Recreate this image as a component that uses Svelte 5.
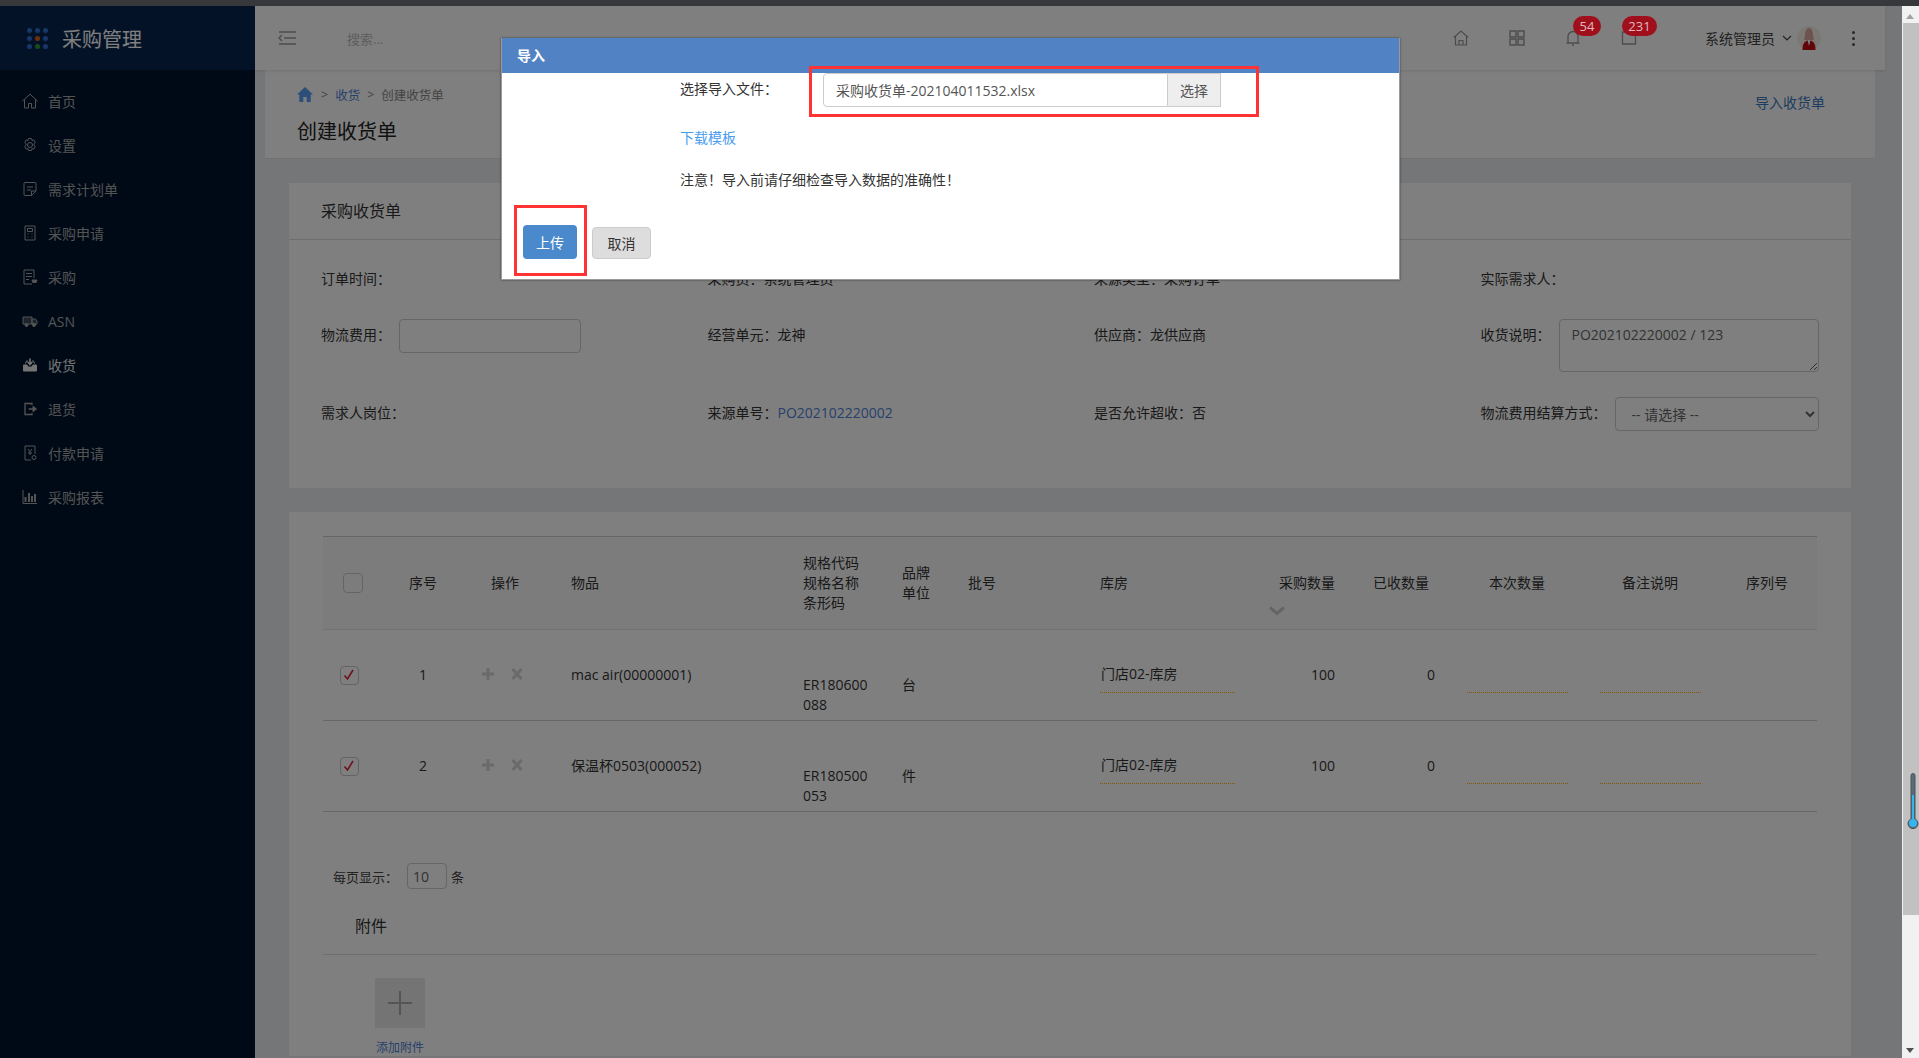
<script>
  const menu = [
    { name: "home", label: "首页" },
    { name: "gear", label: "设置" },
    { name: "note", label: "需求计划单" },
    { name: "calc", label: "采购申请" },
    { name: "list", label: "采购" },
    { name: "truck", label: "ASN" },
    { name: "inbox", label: "收货", active: true },
    { name: "exit", label: "退货" },
    { name: "pay", label: "付款申请" },
    { name: "chart", label: "采购报表" }
  ];

  const rows = [
    { no: 1, item: "mac air(00000001)", code: "ER180600088", unit: "台" },
    { no: 2, item: "保温杯0503(000052)", code: "ER180500053", unit: "件" }
  ];

  const dots = [
    "#2f6fd0", "#2f6fd0", "#2f6fd0",
    "#2f6fd0", "#d8601a", "#2f6fd0",
    "#2f6fd0", "#2f9a3a", "#2f6fd0"
  ];
</script>

<div class="shell">
  <div class="strip"></div>
  <div class="stage">
    <div class="app">
      <aside class="side">
        <div class="brand">
          <div class="dots">
            {#each dots as c}
              <i style="background:{c}"></i>
            {/each}
          </div>
          <span>采购管理</span>
        </div>
        <nav>
          {#each menu as m}
            <a class="item" class:active={m.active} href="#top">
              <svg viewBox="0 0 16 16" width="16" height="16" fill="none" stroke="currentColor" stroke-width="1">
                {#if m.name === "home"}
                  <path d="M.5 8 8 1.2 15.500 8M2.500 6.500V15h4v-4.500h3V15h4V6.500" />
                {:else if m.name === "gear"}
                  <circle cx="8" cy="8" r="2.500" />
                  <path d="M6.500 1.500h3l.5 2 1.800-.6 1.500 2.600-1.400 1.300 0 1.400 1.400 1.300-1.500 2.600-1.800-.6-.5 2h-3l-.5-2-1.800.6-1.500-2.600 1.400-1.300 0-1.400-1.400-1.300 1.500-2.600 1.800.6z" />
                {:else if m.name === "note"}
                  <path d="M3 1.500h10a1 1 0 0 1 1 1V10l-4.500 4.500H3a1 1 0 0 1-1-1v-11a1 1 0 0 1 1-1zM5 6h6M5 9h4M9.500 14.500V10H14" />
                {:else if m.name === "calc"}
                  <path d="M3 1h10v14H3zM5.500 3.500h5v3h-5zM5.500 9h1M9.500 9h1M5.500 12h1M9.500 12h1" />
                {:else if m.name === "list"}
                  <path d="M10 15H2V1h10v8M4 4.500h6M4 7.500h6M4 10.500h3" />
                  <path d="M10 11h5l-.8 2.500h-3.400z" fill="currentColor" />
                {:else if m.name === "truck"}
                  <path d="M1 4h9v7H1zM10 6h3.500L15 8v3h-5z" fill="currentColor" fill-opacity=".35" />
                  <circle cx="4.500" cy="12" r="1.500" fill="currentColor" />
                  <circle cx="12" cy="12" r="1.500" fill="currentColor" />
                {:else if m.name === "inbox"}
                  <path d="M1.500 8h3.500l1 2h4l1-2h3.500v6h-13z" fill="currentColor" />
                  <path d="M3.500 6.500 4.500 4H6M12.500 6.500 11.500 4H10" />
                  <path d="M8 1.500V7M5.800 5 8 7.500 10.200 5" stroke-width="1.600" />
                {:else if m.name === "exit"}
                  <path d="M10 4V2.500H3v11h7V12" stroke-width="1.300" />
                  <path d="M6.500 8H12.500" stroke-width="1.500" />
                  <path d="M11 5.200 14.500 8 11 10.800z" fill="currentColor" />
                {:else if m.name === "pay"}
                  <path d="M9 15H3V1h10v8" />
                  <path d="M6 4l2 2.500L10 4M8 6.500V10M6 8h4" />
                  <circle cx="12" cy="12.500" r="2" />
                {:else}
                  <path d="M1 1v13.500h14" />
                  <path d="M3.500 8v5M7 4v9M10 7v6M13 5v8" stroke-width="2" />
                {/if}
              </svg>
              <span>{m.label}</span>
            </a>
          {/each}
        </nav>
      </aside>

      <main class="main">
        <header class="top">
          <svg class="burger" viewBox="0 0 18 14" width="18" height="14" fill="none" stroke="currentColor" stroke-width="1.400">
            <path d="M1 1h17M6 7h12M1 13h17M4 4 1 7l3 3" />
          </svg>
          <span class="search">搜索...</span>
          <div class="tools">
            <svg class="tool" viewBox="0 0 16 16" width="16" height="16" fill="none" stroke="currentColor" stroke-width="1.200">
              <path d="M.8 7.500 8 1l7.200 6.500M2.500 6.500V15h11V6.500M6 15v-4.500h4V15M5 15h6" />
            </svg>
            <svg class="tool" viewBox="0 0 16 16" width="16" height="16" fill="none" stroke="currentColor" stroke-width="1.400">
              <path d="M1 1h6v6H1zM9 1h6v6H9zM1 9h6v6H1zM9 9h6v6H9z" />
            </svg>
            <span class="tool-wrap">
              <svg class="tool" viewBox="0 0 16 16" width="16" height="16" fill="none" stroke="currentColor" stroke-width="1.300">
                <path d="M3 13V6.500a5 5 0 0 1 10 0V13zM1.500 13h13M7 15h2" />
              </svg>
              <b class="badge one">54</b>
            </span>
            <span class="tool-wrap">
              <svg class="tool" viewBox="0 0 16 16" width="16" height="16" fill="none" stroke="currentColor" stroke-width="1.300">
                <path d="M1.500 2h13v12h-13z" />
              </svg>
              <b class="badge two">231</b>
            </span>
          </div>
          <div class="user">
            <span>系统管理员</span>
            <svg viewBox="0 0 10 6" width="10" height="6" fill="none" stroke="currentColor" stroke-width="1.200"><path d="M1 1l4 4 4-4" /></svg>
            <svg class="avatar" viewBox="0 0 24 24" width="24" height="24">
              <circle cx="12" cy="12" r="12" fill="#f6efe6" />
              <path d="M8 10c0-5 1.500-8 4-8s4 3 4 8l1 4H7z" fill="#d9a69a" />
              <path d="M5.500 24c0-6 1.500-9 6.500-10 5 1 6.500 4 6.500 10z" fill="#c00d12" />
              <path d="M10.500 14h3L12 20z" fill="#fff" />
            </svg>
          </div>
          <div class="kebab"><i></i><i></i><i></i></div>
        </header>

        <section class="crumbs">
          <div>
            <div class="trail">
              <svg viewBox="0 0 16 15" width="16" height="15"><path d="M8 0 0 7.500h2.300V15h4v-5h3.400v5h4V7.500H16z" fill="#5c9cf5" /></svg>
              <span class="sep">&gt;</span>
              <a href="#top">收货</a>
              <span class="sep">&gt;</span>
              <span class="now">创建收货单</span>
            </div>
            <h1>创建收货单</h1>
          </div>
          <a class="import" href="#top">导入收货单</a>
        </section>

        <section class="card first">
          <h2>采购收货单</h2>
          <div class="form">
            <div class="field"><span>订单时间：</span></div>
            <div class="field"><span>采购员：系统管理员</span></div>
            <div class="field"><span>来源类型：采购订单</span></div>
            <div class="field"><span>实际需求人：</span></div>

            <div class="field"><span>物流费用：</span><input class="fee" type="text" /></div>
            <div class="field"><span>经营单元：龙神</span></div>
            <div class="field"><span>供应商：龙供应商</span></div>
            <div class="field"><span>收货说明：</span><textarea class="memo">PO202102220002 / 123</textarea></div>

            <div class="field"><span>需求人岗位：</span></div>
            <div class="field"><span>来源单号：<a href="#top">PO202102220002</a></span></div>
            <div class="field"><span>是否允许超收：否</span></div>
            <div class="field"><span>物流费用结算方式：</span><select class="way"><option>-- 请选择 --</option></select></div>
          </div>
        </section>

        <section class="card second">
          <table>
            <colgroup>
              <col style="width:67px" /><col style="width:66px" /><col style="width:98px" />
              <col style="width:249px" /><col style="width:99px" /><col style="width:66px" />
              <col style="width:132px" /><col style="width:179px" /><col style="width:94px" />
              <col style="width:94px" /><col style="width:133px" /><col style="width:130px" />
              <col style="width:87px" />
            </colgroup>
            <thead>
              <tr>
                <th><span class="box head"></span></th>
                <th class="mid">序号</th>
                <th class="mid">操作</th>
                <th class="pl17">物品</th>
                <th>规格代码<br />规格名称<br />条形码</th>
                <th>品牌<br />单位</th>
                <th>批号</th>
                <th>库房</th>
                <th class="sorted">
                  采购数量
                  <svg viewBox="0 0 16 10" width="16" height="10" fill="none" stroke="#c8c8c8" stroke-width="3"><path d="M1 1.500l7 6 7-6" /></svg>
                </th>
                <th>已收数量</th>
                <th class="pl22">本次数量</th>
                <th class="pl22">备注说明</th>
                <th class="pl16">序列号</th>
              </tr>
            </thead>
            <tbody>
              {#each rows as r}
                <tr>
                  <td>
                    <span class="box">
                      <svg viewBox="0 0 14 14" width="14" height="14" fill="none" stroke="#e02030" stroke-width="1.600"><path d="M2.500 7.500 5.500 11 11 2" /></svg>
                    </span>
                  </td>
                  <td class="mid">{r.no}</td>
                  <td class="ops">
                    <svg viewBox="0 0 12 12" width="12" height="12" stroke="#d4d4d4" stroke-width="3"><path d="M6 0v12M0 6h12" /></svg>
                    <svg viewBox="0 0 12 12" width="12" height="12" stroke="#d4d4d4" stroke-width="3"><path d="M1.500 1 10.500 11M10.500 1 1.500 11" /></svg>
                  </td>
                  <td class="pl17">{r.item}</td>
                  <td class="two-down"><span class="code">{r.code}</span></td>
                  <td class="one-down">{r.unit}</td>
                  <td></td>
                  <td class="high"><div class="line store">门店02-库房</div></td>
                  <td class="num a">100</td>
                  <td class="num b">0</td>
                  <td class="high"><div class="line blank"></div></td>
                  <td class="high"><div class="line blank"></div></td>
                  <td></td>
                </tr>
              {/each}
            </tbody>
          </table>

          <div class="pager">
            <span>每页显示：</span>
            <input type="text" value="10" />
            <span>条</span>
          </div>

          <h3>附件</h3>
          <div class="attach">
            <div class="plus">
              <svg viewBox="0 0 24 24" width="24" height="24" stroke="#aaa" stroke-width="2"><path d="M12 0v24M0 12h24" /></svg>
            </div>
            <a href="#top">添加附件</a>
          </div>
        </section>
      </main>

      <div class="shade"></div>

      <div class="modal">
        <div class="modal-head">导入</div>
        <div class="modal-body">
          <div class="pick">
            <span>选择导入文件：</span>
            <div class="file">
              <input type="text" value="采购收货单-202104011532.xlsx" />
              <button type="button">选择</button>
            </div>
          </div>
          <a class="tpl" href="#top">下载模板</a>
          <p>注意！导入前请仔细检查导入数据的准确性！</p>
        </div>
        <div class="modal-foot">
          <button type="button" class="up">上传</button>
          <button type="button" class="no">取消</button>
        </div>
        <div class="mark mark-file"></div>
        <div class="mark mark-up"></div>
      </div>
    </div>

    <div class="bar">
      <span class="arrow up-a"></span>
      <div class="thumb"></div>
      <span class="arrow down-a"></span>
      <svg class="thermo" viewBox="0 0 12 56" width="12" height="56">
        <path d="M4 2.500a2 2 0 0 1 4 0V46a5 5 0 1 1-4 0z" fill="#5c6b73" stroke="#4a555c" />
        <rect x="5" y="22" width="2" height="26" fill="#35b4ee" />
        <circle cx="6" cy="50" r="4" fill="#35b4ee" />
      </svg>
    </div>
  </div>
</div>

<style>
  :global(body) {
    margin: 0;
    overflow: hidden;
    font-family: "Open Sans", "Noto Sans CJK SC", sans-serif;
    font-size: 14px;
    color: #333;
  }

  a {
    text-decoration: none;
    color: #4d82d6;
  }

  .shell {
    height: 100vh;
    display: flex;
    flex-direction: column;
    overflow: hidden;
  }

  .strip {
    height: 6px;
    flex: none;
    background: #36383c;
  }

  .stage {
    flex: 1;
    min-height: 0;
    display: flex;
  }

  .app {
    flex: 1;
    min-width: 0;
    position: relative;
    display: flex;
    overflow: hidden;
  }

  .side {
    width: 255px;
    flex: none;
    background: #00142e;
    color: #a8a8a8;
  }

  .brand {
    height: 64px;
    display: flex;
    align-items: center;
    gap: 14px;
    padding-left: 27px;
    box-sizing: border-box;
    background: #08254f;
    font-size: 20px;
    color: #fff;
  }

  .dots {
    width: 21px;
    display: grid;
    grid-template-columns: repeat(3, 5px);
    gap: 3px;
  }

  .dots i {
    height: 5px;
    border-radius: 50%;
  }

  nav {
    padding-top: 9px;
  }

  .item {
    height: 44px;
    display: flex;
    align-items: center;
    gap: 10px;
    padding-left: 22px;
    color: #a8a8a8;
  }

  .item.active {
    color: #e8e8e8;
  }

  .main {
    flex: 1;
    min-width: 0;
    background: #ebedf0;
    padding-right: 17px;
  }

  .top {
    height: 64px;
    background: #fff;
    display: flex;
    align-items: center;
    box-shadow: 0 1px 3px rgba(0, 0, 0, .12);
    color: #999;
    position: relative;
  }

  .burger {
    margin-left: 23px;
  }

  .search {
    margin-left: 51px;
    color: #bbb;
    font-size: 13px;
  }

  .tools {
    margin-left: auto;
    display: flex;
    gap: 40px;
    align-items: center;
  }

  .tool-wrap {
    display: flex;
  }

  .tool {
    display: block;
  }

  .badge {
    position: absolute;
    z-index: 11;
    top: 10px;
    height: 20px;
    border-radius: 10px;
    background: #a0101c;
    color: #e0b8bc;
    font-weight: 400;
    font-size: 13px;
    line-height: 20px;
    text-align: center;
  }

  .badge.one {
    left: 1318px;
    width: 28px;
  }

  .badge.two {
    left: 1367px;
    width: 35px;
  }

  .user {
    margin-left: 68px;
    display: flex;
    align-items: center;
    gap: 5px;
    color: #444;
  }

  .user span {
    margin-right: 2px;
  }

  .kebab {
    margin: 0 30px 0 31px;
    width: 3px;
    display: grid;
    gap: 3px;
  }

  .kebab i {
    height: 3px;
    border-radius: 50%;
    background: #555;
  }

  .crumbs {
    margin: 0 10px;
    height: 88px;
    box-sizing: border-box;
    background: #fff;
    padding: 14px 50px 0 32px;
    display: flex;
    justify-content: space-between;
    box-shadow: 0 1px 1px rgba(0, 0, 0, .04);
  }

  .trail {
    display: flex;
    align-items: center;
    font-size: 12.500px;
    color: #888;
    height: 20px;
  }

  .trail .sep {
    margin: 0 7px;
  }

  .trail svg {
    margin-right: 1px;
  }

  h1 {
    margin: 12px 0 0;
    font-size: 20px;
    font-weight: 400;
    line-height: 32px;
    color: #222;
  }

  .import {
    margin-top: 7px;
    color: #3a78c0;
    line-height: 24px;
  }

  .card {
    margin: 0 34px;
    background: #fff;
  }

  .first {
    margin-top: 25px;
    height: 305px;
  }

  h2 {
    margin: 0;
    height: 57px;
    box-sizing: border-box;
    padding-left: 32px;
    border-bottom: 1px solid #ddd;
    font-size: 16px;
    font-weight: 400;
    line-height: 56px;
    color: #333;
  }

  .form {
    display: grid;
    grid-template-columns: repeat(4, 386.500px);
    grid-template-rows: 34px 56px 34px;
    row-gap: 22px;
    padding: 23px 0 0 32px;
  }

  .field {
    display: flex;
    align-items: flex-start;
    line-height: 31px;
    white-space: nowrap;
    font-size: 14px;
    color: #333;
  }

  .field input,
  .field select,
  .field textarea {
    box-sizing: border-box;
    border: 1px solid #ccc;
    border-radius: 4px;
    background: #fff;
    font-family: inherit;
    font-size: 14px;
    color: #666;
  }

  .fee {
    margin-left: 8px;
    width: 182px;
    height: 34px;
  }

  .memo {
    margin-left: 8px;
    width: 260px;
    height: 53px;
    padding: 5px 12px;
    line-height: 20px;
  }

  .way {
    margin-left: 8px;
    width: 204px;
    height: 34px;
    padding-left: 12px;
  }

  .second {
    margin-top: 24px;
    padding: 24px 34px 0;
  }

  table {
    width: 1494px;
    table-layout: fixed;
    border-collapse: collapse;
    border-top: 1px solid #ccc;
  }

  th {
    box-sizing: border-box;
    height: 93px;
    padding: 0;
    background: #f9f9f9;
    border-bottom: 1px solid #e4e4e4;
    text-align: left;
    font-weight: 400;
    font-size: 14px;
    line-height: 20px;
    color: #333;
  }

  td {
    box-sizing: border-box;
    height: 91px;
    padding: 0;
    border-bottom: 1px solid #ccc;
    font-size: 14px;
    line-height: 20px;
    color: #333;
  }

  .mid {
    text-align: center;
  }

  .pl17 {
    padding-left: 17px;
  }

  .pl22 {
    padding-left: 22px;
  }

  .pl16 {
    padding-left: 16px;
  }

  .box {
    display: block;
    width: 17px;
    height: 17px;
    margin-left: 17px;
    border: 1px solid #c8c8c8;
    border-radius: 4px;
  }

  .box svg {
    display: block;
    margin: 1px 0 0 1px;
  }

  .box.head {
    width: 18px;
    height: 18px;
    margin-left: 20px;
  }

  .sorted {
    position: relative;
  }

  .sorted svg {
    position: absolute;
    left: -10px;
    bottom: 13px;
  }

  .ops svg {
    margin-right: 13px;
  }

  .ops svg:first-child {
    margin-left: 26px;
  }

  .two-down {
    padding-top: 40px;
  }

  .code {
    display: block;
    width: 72px;
    word-break: break-all;
  }

  .one-down {
    padding-top: 20px;
  }

  .high {
    vertical-align: top;
    padding-top: 34px;
  }

  .line {
    height: 29px;
    box-sizing: border-box;
    padding-left: 1px;
    border-bottom: 1px dotted #ffb000;
  }

  .store {
    width: 135px;
  }

  .blank {
    width: 101px;
  }

  .num {
    text-align: right;
  }

  .num.a {
    padding-right: 38px;
  }

  .num.b {
    padding-right: 32px;
  }

  .pager {
    margin-top: 51px;
    padding-left: 10px;
    display: flex;
    align-items: center;
    font-size: 13px;
    color: #444;
  }

  .pager input {
    box-sizing: border-box;
    width: 40px;
    height: 26px;
    margin: 0 4px 0 9px;
    padding: 0 5px;
    border: 1px solid #ccc;
    border-radius: 4px;
    font-family: inherit;
    font-size: 14px;
    color: #666;
  }

  h3 {
    margin: 0;
    height: 66px;
    box-sizing: border-box;
    padding-left: 32px;
    border-bottom: 1px solid #ddd;
    font-size: 16px;
    font-weight: 400;
    line-height: 74px;
    color: #333;
  }

  .attach {
    margin: 23px 0 0 52px;
    width: 50px;
    font-size: 12px;
    text-align: center;
  }

  .attach a {
    display: block;
    margin-top: 10px;
    white-space: nowrap;
  }

  .plus {
    width: 50px;
    height: 50px;
    background: #e8e8e8;
    display: flex;
    align-items: center;
    justify-content: center;
  }

  .shade {
    position: absolute;
    inset: 0;
    z-index: 10;
    background: rgba(0, 0, 0, .5);
  }

  .modal {
    position: absolute;
    z-index: 20;
    left: 501px;
    top: 32px;
    width: 899px;
    height: 242px;
    box-sizing: border-box;
    background: #fff;
    border: 1px solid #999;
    border-top: 0;
    box-shadow: 0 0 2px rgba(0, 0, 0, .5);
  }

  .modal-head {
    height: 35px;
    padding-left: 15px;
    background: #5182c4;
    color: #fff;
    font-size: 14px;
    font-weight: 700;
    line-height: 35px;
  }

  .modal-body {
    height: 144px;
    box-sizing: border-box;
    padding-left: 178px;
    font-size: 14px;
    color: #333;
  }

  .pick {
    display: flex;
    line-height: 32px;
  }

  .pick > span {
    width: 143px;
  }

  .file {
    display: flex;
  }

  .file input {
    box-sizing: border-box;
    width: 345px;
    height: 34px;
    padding: 0 12px;
    border: 1px solid #ccc;
    border-radius: 4px 0 0 4px;
    font-family: inherit;
    font-size: 14px;
    color: #555;
  }

  .file button {
    width: 53px;
    height: 34px;
    padding: 0;
    border: 1px solid #ccc;
    border-left: 0;
    background: #eee;
    font-family: inherit;
    font-size: 14px;
    color: #555;
  }

  .tpl {
    display: block;
    margin-top: 21px;
    line-height: 20px;
    color: #4a9cf0;
  }

  p {
    margin: 22px 0 0;
    line-height: 20px;
  }

  .modal-foot {
    padding-left: 21px;
    display: flex;
    align-items: flex-end;
    gap: 15px;
    height: 34px;
    margin-top: 8px;
  }

  .modal-foot button {
    padding: 0;
    font-family: inherit;
    font-size: 14px;
    border-radius: 4px;
  }

  .up {
    width: 54px;
    height: 34px;
    border: 0;
    background: #4a89cc;
    color: #fff;
  }

  .no {
    width: 59px;
    height: 32px;
    border: 1px solid #ccc;
    background: #ddd;
    color: #333;
  }

  .mark {
    position: absolute;
    box-sizing: border-box;
    border: 3px solid #f33;
  }

  .mark-file {
    left: 307px;
    top: 28px;
    width: 450px;
    height: 51px;
  }

  .mark-up {
    left: 12px;
    top: 167px;
    width: 73px;
    height: 71px;
  }

  .bar {
    width: 17px;
    flex: none;
    position: relative;
    background: #f1f1f1;
    display: flex;
    flex-direction: column;
    align-items: stretch;
  }

  .thumb {
    margin: 17px 0 0 1px;
    height: 892px;
    background: #c1c1c1;
  }

  .arrow {
    position: absolute;
    left: 4px;
    width: 0;
    height: 0;
    border: 4px solid transparent;
  }

  .up-a {
    top: 4px;
    border-bottom: 5px solid #a3a3a3;
  }

  .down-a {
    bottom: 1px;
    border-top: 5px solid #505050;
  }

  .thermo {
    position: absolute;
    left: 5px;
    top: 767px;
  }
</style>
